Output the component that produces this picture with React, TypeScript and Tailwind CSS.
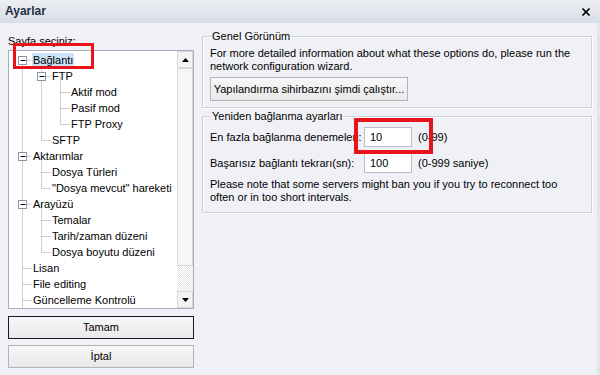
import { X } from "lucide-react";

type Node = { label: string; level: number; box?: boolean; selected?: boolean };

const TREE: Node[] = [
  { label: "Bağlantı", level: 0, box: true, selected: true },
  { label: "FTP", level: 1, box: true },
  { label: "Aktif mod", level: 2 },
  { label: "Pasif mod", level: 2 },
  { label: "FTP Proxy", level: 2 },
  { label: "SFTP", level: 1 },
  { label: "Aktarımlar", level: 0, box: true },
  { label: "Dosya Türleri", level: 1 },
  { label: "\"Dosya mevcut\" hareketi", level: 1 },
  { label: "Arayüzü", level: 0, box: true },
  { label: "Temalar", level: 1 },
  { label: "Tarih/zaman düzeni", level: 1 },
  { label: "Dosya boyutu düzeni", level: 1 },
  { label: "Lisan", level: 0 },
  { label: "File editing", level: 0 },
  { label: "Güncelleme Kontrolü", level: 0 },
];

// tree lines, coordinates relative to the tree content (x=9,y=51 on page)
const ROW = 16;
const cx = (lvl: number) => 13.5 + lvl * 19;
const cy = (i: number) => 9.5 + i * ROW;

function TreeLines() {
  const dot = { stroke: "#a0a0a0", strokeDasharray: "1 1", strokeWidth: 1 };
  const vlines: [number, number, number][] = [
    [0, 0, 17], // level 0 siblings, runs past the bottom
    [1, 0, 5], // Bağlantı children
    [2, 1, 4], // FTP children
    [1, 6, 8],
    [1, 9, 12],
  ];
  return (
    <svg className="absolute left-0 top-0" width={170} height={258}>
      {vlines.map(([lvl, a, b], k) => (
        <line key={k} x1={cx(lvl)} x2={cx(lvl)} y1={cy(a)} y2={Math.min(cy(b), 258)} {...dot} />
      ))}
      {TREE.map((n, i) => (
        <line key={i} x1={cx(n.level)} x2={cx(n.level) + 9} y1={cy(i)} y2={cy(i)} {...dot} />
      ))}
      {TREE.map((n, i) =>
        n.box ? (
          <g key={"b" + i}>
            <rect x={cx(n.level) - 4} y={cy(i) - 4} width={8} height={8} fill="#fff" stroke="#8c97a5" />
            <line x1={cx(n.level) - 2} x2={cx(n.level) + 3} y1={cy(i)} y2={cy(i)} stroke="#000" />
          </g>
        ) : null
      )}
    </svg>
  );
}

function ScrollBar() {
  return (
    <div className="flex w-[16px] flex-col bg-[repeating-conic-gradient(#e6e6e6_0_25%,#fff_0_50%)] bg-[length:2px_2px]">
      <div className="flex h-[17px] items-center justify-center border border-[#d8d8d8] bg-[#f4f4f4]">
        <svg width="7" height="4"><polygon points="0,4 7,4 3.5,0" fill="#000" /></svg>
      </div>
      <div className="h-[198px] border border-[#d8d8d8] bg-[#f6f6f6]" />
      <div className="flex-1" />
      <div className="flex h-[17px] items-center justify-center border border-[#d8d8d8] bg-[#f4f4f4]">
        <svg width="7" height="4"><polygon points="0,0 7,0 3.5,4" fill="#000" /></svg>
      </div>
    </div>
  );
}

function Button({ children, dark, className }: { children: string; dark?: boolean; className?: string }) {
  return (
    <div
      className={`flex items-center justify-center border bg-gradient-to-b from-[#f7f7f7] to-[#e9e9e9] ${
        dark ? "border-[#1a1a1a]" : "border-[#b4b4b4]"
      } ${className ?? ""}`}
    >
      {children}
    </div>
  );
}

function Input({ value }: { value: string }) {
  return (
    <div className="flex h-[20px] w-[48px] items-center border border-[#b8bcc4] bg-white pl-[5px]">{value}</div>
  );
}

const groupCls =
  "border border-[#cdd1d9] px-[7px] shadow-[inset_1px_1px_0_#fff,1px_1px_0_#fff]";

export default function App() {
  return (
    <div
      className="relative flex h-[375px] w-[600px] flex-col overflow-hidden bg-[#f0f1f6] text-[11px] leading-[13px] text-black"
      style={{ fontFamily: '"Liberation Sans", Arial, sans-serif' }}
    >
      {/* title bar */}
      <div className="flex h-[23px] items-center justify-between bg-gradient-to-b from-[#eceef3] to-[#d9dde5] pl-[5px] pr-[8px]">
        <span className="text-[12px] font-bold text-[#1f2f45]">Ayarlar</span>
        <X size={12} strokeWidth={3.5} className="text-black" />
      </div>

      <div className="flex flex-1 border-r-[3px] border-[#e2e4ea]">
        {/* left column */}
        <div className="flex w-[194px] flex-col pl-[8px]">
          <div className="mt-[12px] h-[15px]">Sayfa seçiniz:</div>
          <div className="flex h-[259px] border border-[#a9aeb6] bg-white">
            <div className="relative flex-1 pt-[1px]">
              <TreeLines />
              {TREE.map((n, i) => (
                <div key={i} className="relative flex h-[16px] items-center" style={{ paddingLeft: 23 + n.level * 19 }}>
                  <span className={`px-[1px] leading-[14px] ${n.selected ? "bg-[#cbe3f8]" : ""}`}>{n.label}</span>
                </div>
              ))}
            </div>
            <ScrollBar />
          </div>
          <Button dark className="mt-[7px] h-[23px]">Tamam</Button>
          <Button className="mt-[6px] h-[23px]">İptal</Button>
        </div>

        {/* right column */}
        <div className="flex flex-1 flex-col pl-[8px] pr-[5px] pt-[7px]">
          <fieldset className={`${groupCls} h-[78px]`}>
            <legend className="ml-[1px] px-[1px]">Genel Görünüm</legend>
            <div className="mt-[4px]">
              For more detailed information about what these options do, please run the
              <br />
              network configuration wizard.
            </div>
            <Button className="mt-[4px] h-[24px] w-[198px]">Yapılandırma sihirbazını şimdi çalıştır...</Button>
          </fieldset>

          <fieldset className={`${groupCls} mt-[2px] h-[103px]`}>
            <legend className="ml-[1px] px-[1px]">Yeniden bağlanma ayarları</legend>
            <div className="mt-[4px] flex items-center">
              <span className="w-[154px]">En fazla bağlanma denemeleri:</span>
              <Input value="10" />
              <span className="ml-[6px]">(0-99)</span>
            </div>
            <div className="mt-[6px] flex items-center">
              <span className="w-[154px]">Başarısız bağlantı tekrarı(sn):</span>
              <Input value="100" />
              <span className="ml-[6px]">(0-999 saniye)</span>
            </div>
            <div className="mt-[5px]">
              Please note that some servers might ban you if you try to reconnect too
              <br />
              often or in too short intervals.
            </div>
          </fieldset>
        </div>
      </div>

      {/* red highlight annotations */}
      <div className="absolute left-[13px] top-[43px] h-[26px] w-[81px] border-[3px] border-[#e8141c]" />
      <div className="absolute left-[354px] top-[118px] h-[36px] w-[79px] border-[4px] border-[#e8141c]" />
    </div>
  );
}
